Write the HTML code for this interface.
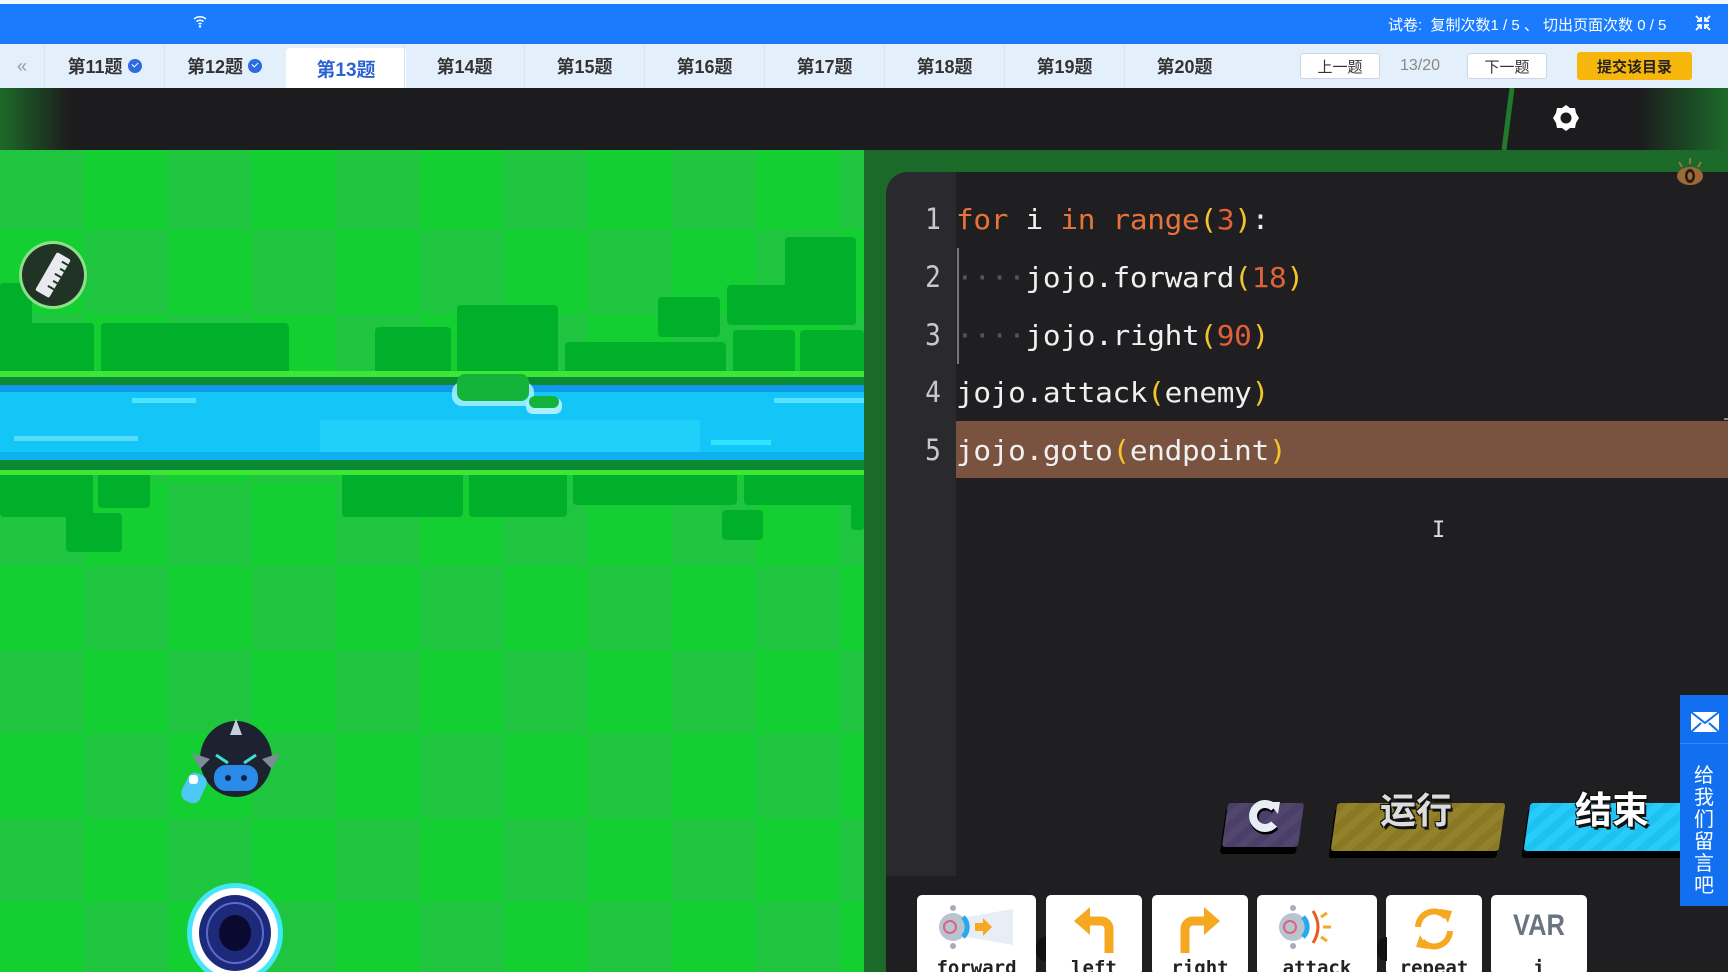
<!DOCTYPE html>
<html><head><meta charset="utf-8">
<style>
*{margin:0;padding:0;box-sizing:border-box}
body{width:1728px;height:972px;overflow:hidden;position:relative;background:#1c1c1e;font-family:"Liberation Sans","Noto Sans CJK SC",sans-serif}
.abs{position:absolute}
#top{left:0;top:4px;width:1728px;height:40px;background:#1a7bff}
#topwhite{left:0;top:0;width:1728px;height:4px;background:#f4f7fb}
#tabs{left:0;top:44px;width:1728px;height:44px;background:#e4effc}
.tab{position:absolute;top:0;height:44px;width:120px;border-left:1px solid #d3e2f4;font-weight:bold;font-size:18px;color:#333;display:flex;align-items:center;justify-content:center;gap:5px}
.tab.act{background:#fff;color:#2b63d3;top:4px;height:40px;border-radius:4px 4px 0 0;border:none;font-size:19px}
.chk{width:14px;height:14px;border-radius:50%;background:#2f6be0;display:inline-block;position:relative}
.chk:after{content:"";position:absolute;left:4px;top:3px;width:5px;height:3px;border-left:1.5px solid #fff;border-bottom:1.5px solid #fff;transform:rotate(-45deg)}
.btn{position:absolute;top:53px;height:26px;background:#fff;border:1px solid #cdd6e0;border-radius:3px;font-size:15px;color:#333;display:flex;align-items:center;justify-content:center}
#dark{left:0;top:88px;width:1728px;height:62px;background:#1c1c1e}
#game{left:0;top:150px;width:864px;height:822px;background:#17cd34;overflow:hidden}
#rp{left:864px;top:150px;width:864px;height:822px;background:#1b6a29}
#code{left:886px;top:172px;width:842px;height:800px;background:#1f1f21;border-radius:22px 0 0 0;overflow:hidden}
#gut{left:0;top:0;width:70px;height:704px;background:#2a2a2e}
.ln{position:absolute;left:12px;width:70px;text-align:center;font-family:"DejaVu Sans Mono",monospace;font-size:29px;color:#c8c8c8;transform:scaleX(.9)}
.cl{position:absolute;left:70px;font-family:"DejaVu Sans Mono",monospace;font-size:28px;color:#f0f0f0;white-space:pre;letter-spacing:-.3px;transform-origin:left;transform:scaleX(1.05)}
.k{color:#e8733a}.n{color:#e0603a}.p{color:#f5c42a}.d{color:#555}
.card{position:absolute;top:895px;height:80px;background:#fff;border-radius:5px;text-align:center}
.card span{position:absolute;left:0;right:0;bottom:-4px;font-family:"DejaVu Sans Mono",monospace;font-weight:bold;font-size:19px;color:#222}
</style></head><body>
<div class="abs" id="topwhite"></div>
<div class="abs" id="top">
 <svg class="abs" style="left:192px;top:10px" width="16" height="14" viewBox="0 0 16 14"><path d="M2 5a9 9 0 0 1 12 0M4.5 7.5a5.5 5.5 0 0 1 7 0M6.5 10a2.5 2.5 0 0 1 3 0" stroke="#fff" stroke-width="1.5" fill="none"/><circle cx="8" cy="12.5" r="1.2" fill="#fff"/></svg>
 <div class="abs" style="left:1388px;top:10px;font-size:15px;color:#fff">试卷:&nbsp; 复制次数1 / 5 、 切出页面次数 0 / 5</div>
 <svg class="abs" style="left:1694px;top:10px" width="18" height="18" viewBox="0 0 18 18" stroke="#fff" stroke-width="1.8" fill="none"><path d="M2 2l5 5M7 3v4H3M16 2l-5 5M11 3v4h4M2 16l5-5M3 11h4v4M16 16l-5-5M15 11h-4v4"/></svg>
</div>
<div class="abs" id="tabs">
 <div class="abs" style="left:0;top:0;width:44px;height:44px;color:#8a9ab0;font-size:18px;display:flex;align-items:center;justify-content:center">«</div>
 <div class="tab" style="left:44px">第11题<i class="chk"></i></div>
 <div class="tab" style="left:164px">第12题<i class="chk"></i></div>
 <div class="tab act" style="left:286px">第13题</div>
 <div class="tab" style="left:404px">第14题</div>
 <div class="tab" style="left:524px">第15题</div>
 <div class="tab" style="left:644px">第16题</div>
 <div class="tab" style="left:764px">第17题</div>
 <div class="tab" style="left:884px">第18题</div>
 <div class="tab" style="left:1004px">第19题</div>
 <div class="tab" style="left:1124px">第20题</div>
 <div class="btn" style="left:1300px;top:9px;width:80px">上一题</div>
 <div class="abs" style="left:1400px;top:13px;font-size:16px;color:#888">13/20</div>
 <div class="btn" style="left:1467px;top:9px;width:80px">下一题</div>
 <div class="btn" style="left:1577px;top:8px;width:115px;height:28px;background:#f7b60c;border-color:#f7b60c;font-weight:bold;color:#222">提交该目录</div>
</div>
<div class="abs" id="dark">
 <div class="abs" style="left:0;top:0;width:70px;height:62px;background:linear-gradient(90deg,#1e6a28,#1c1c1e)"></div>
 <div class="abs" style="left:1640px;top:0;width:88px;height:62px;background:linear-gradient(90deg,#1c1c1e,#1c6b2a)"></div>
 <svg class="abs" style="left:1490px;top:0" width="30" height="62"><path d="M22 0L14 62" stroke="#1f7a2c" stroke-width="5"/></svg>
 <svg class="abs" style="left:1551px;top:15px" width="30" height="30" viewBox="0 0 30 30"><path d="M15 2l4 3 5 0 1 5 3 5-3 5-1 5-5 0-4 3-4-3-5 0-1-5-3-5 3-5 1-5 5 0z" fill="#fff"/><circle cx="15" cy="15" r="5.5" fill="#1c1c1e"/></svg>
</div>
<div class="abs" id="game">
<svg width="864" height="822" style="position:absolute;left:0;top:0">
 <defs><pattern id="ck" width="168" height="168" patternUnits="userSpaceOnUse" x="0" y="-4">
  <rect width="168" height="168" fill="#14cf31"/><rect width="84" height="84" fill="#1fc53e"/><rect x="84" y="84" width="84" height="84" fill="#1fc53e"/></pattern></defs>
 <rect width="864" height="822" fill="url(#ck)"/>
 <g fill="#00b02b">
  <rect x="0" y="133" width="32" height="92" rx="3"/>
  <rect x="0" y="173" width="94" height="52" rx="4"/>
  <rect x="101" y="173" width="188" height="52" rx="4"/>
  <rect x="375" y="177" width="76" height="48" rx="4"/>
  <rect x="457" y="155" width="101" height="70" rx="4"/>
  <rect x="565" y="192" width="161" height="33" rx="4"/>
  <rect x="658" y="147" width="62" height="40" rx="4"/>
  <rect x="727" y="135" width="129" height="40" rx="4"/>
  <rect x="785" y="87" width="71" height="88" rx="4"/>
  <rect x="733" y="180" width="62" height="45" rx="4"/>
  <rect x="800" y="180" width="64" height="45" rx="4"/>
  <rect x="0" y="322" width="93" height="45" rx="4"/>
  <rect x="98" y="322" width="52" height="36" rx="4"/>
  <rect x="66" y="363" width="56" height="39" rx="4"/>
  <rect x="342" y="322" width="121" height="45" rx="4"/>
  <rect x="469" y="322" width="98" height="45" rx="4"/>
  <rect x="573" y="322" width="164" height="33" rx="4"/>
  <rect x="744" y="322" width="120" height="33" rx="4"/>
  <rect x="851" y="322" width="13" height="58" rx="3"/>
  <rect x="722" y="360" width="41" height="30" rx="4"/>
 </g>
 <g fill="#3ee635">
  <rect x="0" y="221" width="864" height="6"/><rect x="0" y="320" width="864" height="5"/>
 </g>
 <rect x="0" y="227" width="864" height="8" fill="#0a8a32"/>
 <rect x="0" y="310" width="864" height="10" fill="#0a8a32"/>
 <rect x="0" y="235" width="864" height="75" fill="#14c6f7"/>
 <rect x="0" y="235" width="864" height="7" fill="#1198ea"/>
 <rect x="0" y="302" width="864" height="8" fill="#0fb0f0"/>
 <rect x="320" y="270" width="380" height="32" fill="#2ad8fc" opacity=".5"/>
 <rect x="132" y="248" width="64" height="5" fill="#4fe2ff"/><rect x="14" y="286" width="124" height="5" fill="#55ddf8"/>
 <rect x="774" y="248" width="90" height="5" fill="#5ae0ff"/><rect x="711" y="290" width="60" height="5" fill="#34e4ff"/>
 <rect x="452" y="232" width="82" height="24" rx="10" fill="#a8f0ff" opacity=".85"/><rect x="457" y="224" width="72" height="27" rx="8" fill="#14b33a"/>
 <rect x="526" y="248" width="36" height="16" rx="7" fill="#a8f0ff"/><rect x="529" y="246" width="30" height="12" rx="6" fill="#14b33a"/>
</svg>
<svg class="abs" style="left:17px;top:89px" width="72" height="72" viewBox="0 0 72 72"><circle cx="36" cy="36" r="34" fill="#8de08a"/><circle cx="36" cy="36" r="31" fill="#203325"/><g transform="rotate(30 36 36)"><rect x="28" y="14" width="16" height="44" rx="2" fill="#e8eaf0"/><path d="M37 20h7M39 27h5M37 34h7M39 41h5M37 48h7" stroke="#203325" stroke-width="2"/></g></svg>
<svg class="abs" style="left:170px;top:555px" width="120" height="110" viewBox="0 0 120 110">
 <ellipse cx="66" cy="54" rx="36" ry="38" fill="#1c2230"/><path d="M66 14l-6 16h12z" fill="#c8d0e0"/><path d="M22 48l18 6-10 10zM110 48l-18 6 10 10z" fill="#7e8c9a"/>
 <rect x="44" y="60" width="44" height="26" rx="12" fill="#2a8ae8"/><circle cx="58" cy="73" r="3" fill="#102040"/><circle cx="74" cy="73" r="3" fill="#102040"/>
 <path d="M46 50l12 8M86 50l-12 8" stroke="#3fe0d0" stroke-width="3"/>
 <rect x="14" y="68" width="20" height="30" rx="8" fill="#4ec8f5" transform="rotate(25 24 83)"/><rect x="19" y="70" width="9" height="9" rx="3" fill="#fff"/>
</svg>
<svg class="abs" style="left:180px;top:728px" width="110" height="100" viewBox="0 0 110 100"><ellipse cx="55" cy="55" rx="48" ry="50" fill="#44e6f8"/><ellipse cx="55" cy="55" rx="43" ry="45" fill="#fff"/><ellipse cx="55" cy="55" rx="36" ry="38" fill="#1d2a7a"/><ellipse cx="55" cy="55" rx="28" ry="30" fill="none" stroke="#5a6ad0" stroke-width="2"/><ellipse cx="55" cy="55" rx="16" ry="18" fill="#0a0a30"/></svg>
</div>
<div class="abs" id="rp">
 <div class="abs" id="code" style="left:22px;top:22px">
  <div class="abs" id="gut"></div>
  <div class="ln" style="top:30px">1</div><div class="ln" style="top:88px">2</div><div class="ln" style="top:146px">3</div><div class="ln" style="top:203px">4</div><div class="ln" style="top:261px">5</div>
  <div class="abs" style="left:70px;top:249px;width:772px;height:57px;background:#7a5240"></div>
  <div class="abs" style="left:71px;top:76px;width:2px;height:116px;background:#777"></div>
  <div class="cl" style="top:31px"><span class="k">for</span> i <span class="k">in</span> <span class="k">range</span><span class="p">(</span><span class="n">3</span><span class="p">)</span>:</div>
  <div class="cl" style="top:89px"><span class="d">····</span>jojo.forward<span class="p">(</span><span class="n">18</span><span class="p">)</span></div>
  <div class="cl" style="top:147px"><span class="d">····</span>jojo.right<span class="p">(</span><span class="n">90</span><span class="p">)</span></div>
  <div class="cl" style="top:204px">jojo.attack<span class="p">(</span>enemy<span class="p">)</span></div>
  <div class="cl" style="top:262px">jojo.goto<span class="p">(</span>endpoint<span class="p">)</span></div>
  <div class="abs" style="left:838px;top:246px;width:4px;height:2px;background:#888"></div>
  <div class="abs" style="left:546px;top:346px;color:#ddd;font-size:22px;font-family:'DejaVu Sans Mono',monospace">I</div>
  <!-- buttons -->
  <div class="abs" style="left:337px;top:636px;width:76px;height:46px;background:#000;transform:skewX(-8deg);border-radius:3px"></div>
  <div class="abs" style="left:339px;top:631px;width:76px;height:44px;background:repeating-linear-gradient(135deg,#4a3f68 0 8px,#52466f 8px 16px);transform:skewX(-8deg);border-radius:3px"></div>
  <svg class="abs" style="left:358px;top:624px" width="40" height="40" viewBox="0 0 40 40"><path d="M30 12A12 12 0 1 0 30 28" stroke="#000" stroke-width="9" fill="none" transform="translate(1,2)"/><path d="M30 12A12 12 0 1 0 30 28" stroke="#e8ecf5" stroke-width="8" fill="none"/><path d="M24 6l12 0-2 12z" fill="#e8ecf5"/></svg>
  <div class="abs" style="left:446px;top:636px;width:168px;height:50px;background:#000;transform:skewX(-8deg);border-radius:3px"></div>
  <div class="abs" style="left:448px;top:631px;width:168px;height:48px;background:repeating-linear-gradient(135deg,#8a7824 0 8px,#93822b 8px 16px);transform:skewX(-8deg);border-radius:3px"></div>
  <div class="abs" style="left:480px;top:610px;width:100px;text-align:center;font-size:36px;font-weight:bold;color:#dcdcdc;text-shadow:2px 3px 0 #111,-1px -1px 0 #111,1px -1px 0 #111,-1px 1px 0 #111">运行</div>
  <div class="abs" style="left:639px;top:636px;width:170px;height:50px;background:#000;transform:skewX(-8deg);border-radius:3px"></div>
  <div class="abs" style="left:641px;top:631px;width:170px;height:48px;background:repeating-linear-gradient(135deg,#1ec2f2 0 8px,#27ccf8 8px 16px);transform:skewX(-8deg);border-radius:3px"></div>
  <div class="abs" style="left:676px;top:608px;width:100px;text-align:center;font-size:37px;font-weight:bold;color:#fff;text-shadow:2px 3px 0 #111,-1px -1px 0 #111,1px -1px 0 #111,-1px 1px 0 #111">结束</div>
  <!-- cards -->
  <div class="card" style="left:31px;top:723px;width:119px"><svg class="abs" style="left:18px;top:8px" width="80" height="48" viewBox="0 0 80 48"><path d="M20 16L78 6v36L20 32z" fill="#e8eef5"/><circle cx="18" cy="5" r="3" fill="#aab"/><circle cx="18" cy="43" r="3" fill="#aab"/><circle cx="18" cy="24" r="14" fill="#b8c4d0"/><path d="M28 14a14 14 0 0 1 0 20" stroke="#28a8f0" stroke-width="5" fill="none"/><circle cx="15" cy="24" r="6" fill="none" stroke="#e06080" stroke-width="2"/><path d="M40 20h8v-5l9 9-9 9v-5h-8z" fill="#f5a820"/></svg><span>forward</span></div>
  <div class="card" style="left:160px;top:723px;width:96px"><svg class="abs" style="left:25px;top:10px" width="48" height="50" viewBox="0 0 48 50"><path d="M38 48V24a8 8 0 0 0-8-8H16" stroke="#f5a820" stroke-width="9" fill="none"/><path d="M3 16l16-14v28z" fill="#f5a820"/></svg><span>left</span></div>
  <div class="card" style="left:266px;top:723px;width:96px"><svg class="abs" style="left:23px;top:10px" width="48" height="50" viewBox="0 0 48 50"><path d="M10 48V24a8 8 0 0 1 8-8h14" stroke="#f5a820" stroke-width="9" fill="none"/><path d="M45 16l-16-14v28z" fill="#f5a820"/></svg><span>right</span></div>
  <div class="card" style="left:371px;top:723px;width:120px"><svg class="abs" style="left:18px;top:8px" width="80" height="48" viewBox="0 0 80 48"><circle cx="18" cy="5" r="3" fill="#aab"/><circle cx="18" cy="43" r="3" fill="#aab"/><circle cx="18" cy="24" r="14" fill="#b8c4d0"/><path d="M28 14a14 14 0 0 1 0 20" stroke="#28a8f0" stroke-width="5" fill="none"/><circle cx="15" cy="24" r="6" fill="none" stroke="#e06080" stroke-width="2"/><path d="M38 8q10 16 0 32" stroke="#e85a20" stroke-width="3" fill="none"/><path d="M46 14l6-4M48 24h8M46 34l6 4" stroke="#f5a820" stroke-width="3"/></svg><span>attack</span></div>
  <div class="card" style="left:500px;top:723px;width:96px"><svg class="abs" style="left:24px;top:10px" width="48" height="48" viewBox="0 0 48 48"><path d="M8 22A16 16 0 0 1 36 12M40 26A16 16 0 0 1 12 36" stroke="#f5a820" stroke-width="6" fill="none"/><path d="M30 4l12 2-4 12zM18 44l-12-2 4-12z" fill="#f5a820"/></svg><span>repeat</span></div>
  <div class="card" style="left:605px;top:723px;width:96px"><div style="position:absolute;left:0;right:0;top:14px;font-size:30px;font-weight:bold;color:#6a7480;transform:scaleX(.85)">VAR</div><span>i</span></div>
  <div class="abs" style="left:150px;top:765px;width:10px;height:24px;background:#111;border-radius:10px 0 0 10px"></div>
  <div class="abs" style="left:491px;top:765px;width:10px;height:24px;background:#111;border-radius:10px 0 0 10px"></div>
 </div>
 <svg class="abs" style="left:808px;top:4px" width="36" height="36" viewBox="0 0 36 36"><path d="M7 8l3 5M18 4v6M29 8l-3 5" stroke="#9a7a3a" stroke-width="1.8"/><ellipse cx="18" cy="22" rx="13" ry="9" fill="#9c6a3a"/><ellipse cx="18" cy="22" rx="5" ry="7" fill="#2a1a10"/><ellipse cx="18" cy="22" rx="2.5" ry="4" fill="#9c6a3a"/></svg>
</div>
<div class="abs" style="left:1680px;top:695px;width:48px;height:211px;background:#1270f0">
 <svg class="abs" style="left:10px;top:16px" width="30" height="22" viewBox="0 0 30 22"><rect x="1" y="1" width="28" height="20" fill="#fff"/><path d="M1 1l14 11L29 1M1 21l10-9M29 21l-10-9" stroke="#1270f0" stroke-width="2" fill="none"/></svg>
 <div class="abs" style="left:0;top:48px;width:48px;height:1px;background:#3a8af5"></div>
 <div class="abs" style="left:13px;top:70px;width:22px;font-size:20px;line-height:22px;color:#fff;text-align:center">给我们留言吧</div>
</div>
</body></html>
